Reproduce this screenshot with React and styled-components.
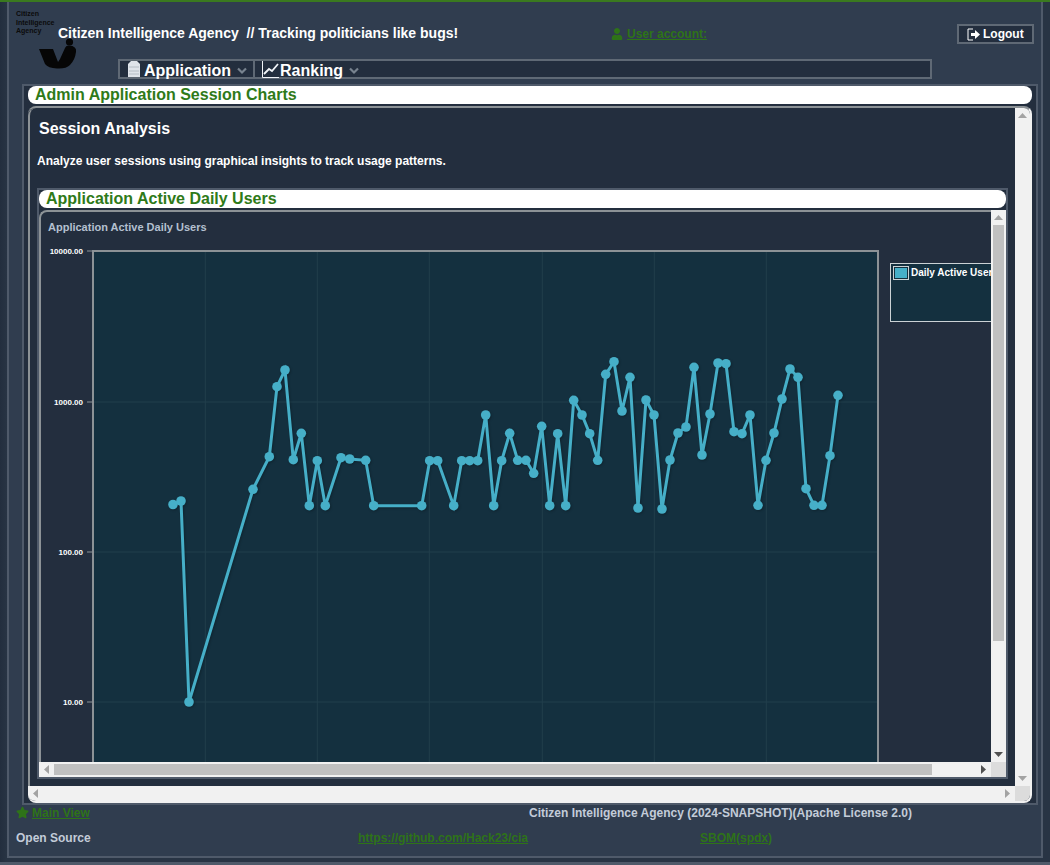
import React from "react";
import styled, { createGlobalStyle } from "styled-components";
import { FaUser, FaStar } from "react-icons/fa";

const GlobalStyle = createGlobalStyle`
  html, body {
    margin: 0;
    padding: 0;
    height: 865px;
    overflow: hidden;
    background: #232e3e;
    font-family: "Liberation Sans", Arial, sans-serif;
  }
`;

const colors = {
  main: "#303d4f",
  dark: "#232e3e",
  line: "#4f5a6a",
  barLine: "#5f6975",
  soft: "#8c9296",
  green: "#2f7a19",
  link: "#2e7318",
  muted: "#c3ccd9",
  plot: "#14303f",
  grid: "#213f4c",
  series: "#46afc8",
  track: "#f1f1f1",
  thumb: "#c0c0c0",
  corner: "#dcdcdc",
};

const Page = styled.div`
  height: 865px;
  box-sizing: border-box;
  border-top: 2px solid #3a7a1f;
  display: flex;
  flex-direction: column;
  background: linear-gradient(90deg, #232e3e, #283444 7px);
`;

const Frame = styled.div`
  width: 1036px;
  height: 856px;
  margin-left: 7px;
  box-sizing: border-box;
  border: solid ${colors.line};
  border-width: 0 2px 2px;
  background: ${colors.main};
`;

const BottomStrip = styled.div`
  margin-top: 4px;
  height: 3px;
  background: ${colors.line};
`;

const Header = styled.header`
  height: 82px;
  display: flex;
  flex-direction: column;
`;

const TopRow = styled.div`
  height: 57px;
  padding-left: 7px;
  display: flex;
`;

const Logo = styled.div`
  width: 42px;
  padding-top: 8px;
  font-size: 7px;
  line-height: 8.5px;
  font-weight: bold;
  color: #0b0b0b;

  svg {
    display: block;
    margin: 2px 0 0 22px;
  }
`;

const LogoText = styled.div`
  white-space: nowrap;
`;

const Title = styled.div`
  width: 553px;
  padding-top: 23px;
  font-size: 14px;
  line-height: 16px;
  font-weight: bold;
  color: #fff;
  white-space: pre;
`;

const SmallLink = styled.a`
  font-size: 12px;
  font-weight: bold;
  color: ${colors.link};
  text-decoration: underline;
`;

const UserBlock = styled.div`
  width: 346px;
  padding-top: 25px;
  height: 14px;
  display: flex;
  align-items: center;
  gap: 4px;
  color: ${colors.link};
`;

const LogoutButton = styled.button`
  margin-top: 22px;
  width: 77px;
  height: 20px;
  padding: 0 0 0 8px;
  box-sizing: border-box;
  border: 2px solid ${colors.barLine};
  background: ${colors.dark};
  color: #fff;
  font: bold 12px "Liberation Sans", Arial, sans-serif;
  display: flex;
  align-items: center;
  gap: 2px;
`;

const NavBar = styled.nav`
  margin-left: 109px;
  width: 814px;
  height: 20px;
  box-sizing: border-box;
  border: 2px solid ${colors.barLine};
  background: ${colors.dark};
  display: flex;
`;

const NavItem = styled.div`
  width: ${(p) => p.$width}px;
  padding-left: ${(p) => p.$inset}px;
  box-sizing: border-box;
  height: 16px;
  display: flex;
  align-items: center;
  color: #fff;
  font-size: 16px;
  font-weight: bold;
  line-height: 16px;
  border-right: ${(p) => (p.$divided ? `2px solid ${colors.barLine}` : "none")};
`;

const NavLabel = styled.span`
  margin: 4px 5px 0 ${(p) => p.$gap}px;
`;

const ChevronMark = styled.svg`
  margin-top: 3px;
`;

const ContentFrame = styled.main`
  margin-left: 13px;
  width: 1016px;
  height: 721px;
  box-sizing: border-box;
  border: 2px solid ${colors.line};
  padding: 0 4px 0;
  background: ${colors.dark};
`;

const TitleBar = styled.h2`
  margin: 0 0 2px;
  height: 18px;
  padding-left: ${(p) => p.$inset}px;
  background: #fff;
  border-radius: 8px;
  color: ${colors.green};
  font-size: 16px;
  line-height: 18px;
  font-weight: bold;
`;

const ScrollPanel = styled.section`
  height: 697px;
  box-sizing: border-box;
  border: solid;
  border-width: 2px 2px 2px 0;
  border-color: ${colors.soft} ${colors.track} ${colors.track};
  border-radius: 8px;
  background: ${colors.dark};
  overflow: hidden;
  display: grid;
  grid-template-columns: 1fr 15px;
  grid-template-rows: 1fr 15px;
`;

const PanelBody = styled.div`
  min-width: 0;
  min-height: 0;
  overflow: hidden;
  border-left: 2px solid ${colors.soft};
  border-top-left-radius: 8px;
`;

const Heading = styled.h3`
  margin: 11px 0 0 9px;
  font-size: 16px;
  line-height: 20px;
  font-weight: bold;
  color: #fff;
`;

const Intro = styled.p`
  margin: 15px 0 0 7px;
  font-size: 12px;
  line-height: 14px;
  font-weight: bold;
  color: #fff;
`;

const ChartFrame = styled.div`
  margin: 20px 0 0 7px;
  width: 971px;
  height: 591px;
  box-sizing: border-box;
  border: 2px solid ${colors.line};
`;

const ChartPanel = styled.div`
  height: 567px;
  background: ${colors.dark};
  display: grid;
  grid-template-columns: 1fr 15px;
  grid-template-rows: 1fr 15px;
`;

const ChartViewport = styled.div`
  min-width: 0;
  min-height: 0;
  overflow: hidden;
  border: solid ${colors.soft};
  border-width: 2px 0 0 2px;
  border-top-left-radius: 8px;

  svg {
    display: block;
  }
`;

const ScrollTrack = styled.div`
  background: ${colors.track};
  display: flex;
  flex-direction: ${(p) => (p.$vertical ? "column" : "row")};
  justify-content: space-between;
  min-width: 0;
  min-height: 0;
`;

const ArrowCell = styled.div`
  flex: 0 0 15px;
  height: 15px;
  display: flex;
  align-items: center;
  justify-content: center;
  color: ${(p) => (p.$active ? "#505050" : "#a3a3a3")};
`;

const Thumb = styled.div`
  flex: 0 0 auto;
  background: ${colors.thumb};
  width: ${(p) => (p.$vertical ? "11px" : `${p.$length}px`)};
  height: ${(p) => (p.$vertical ? `${p.$length}px` : "11px")};
  margin: ${(p) => (p.$vertical ? "0 2px" : "2px 0")};
  margin-right: ${(p) => (p.$vertical ? "2px" : "auto")};
  margin-bottom: ${(p) => (p.$vertical ? "auto" : "2px")};
`;

const ScrollCorner = styled.div`
  background: ${(p) => p.$color};
`;

const Footer = styled.footer`
  padding: 0 0 0 7px;
  font-size: 12px;
  font-weight: bold;
  color: ${colors.muted};
`;

const FooterRow = styled.div`
  display: grid;
  grid-template-columns: ${(p) => p.$columns};
  align-items: center;
  height: ${(p) => p.$height}px;
`;

const StarLink = styled.div`
  display: flex;
  align-items: center;
  gap: 3px;
  color: ${colors.link};
`;

// chart points in page pixels, the svg viewBox starts where the panel starts
const points = [
  [173, 504.5], [181, 501], [189, 702], [253, 489.3], [269.3, 456.7], [277, 386.7], [285, 370],
  [293.3, 459.7], [301.3, 433.3], [309.3, 505.7], [317.3, 460.7], [325.3, 505.7], [341, 457.7],
  [349.7, 459], [365.7, 460.3], [373.7, 505.7], [421.7, 505.7], [429.7, 460.7], [437.7, 460.7],
  [453.7, 505.7], [461.7, 460.7], [469.7, 460.7], [477.7, 460.7], [485.7, 415], [493.7, 505.7],
  [501.7, 460.7], [509.7, 433.3], [517.7, 460.3], [526, 460.3], [533.7, 473.3], [541.7, 426.3],
  [549.7, 505.7], [557.7, 433.7], [565.7, 505.7], [573.7, 400.3], [582, 415], [589.7, 433.7],
  [597.7, 460.3], [605.7, 374.3], [614, 361.7], [622, 411], [630, 377.3], [638, 508], [646, 400],
  [654, 415], [662, 509], [670, 460], [678, 433], [686, 427], [694, 367.3], [702, 455], [710, 414],
  [718, 363], [726, 363.7], [734, 431.7], [742, 433.7], [750, 415], [758, 505.3], [766, 460.3],
  [774, 433], [782, 399], [790, 369], [798, 377.3], [806, 488.7], [814, 505.3], [822, 505.3],
  [830, 455.7], [838, 395.3],
];

const yTicks = [
  [251, "10000.00"],
  [402, "1000.00"],
  [552, "100.00"],
  [702, "10.00"],
];
const xGrid = [205.3, 317.3, 429.3, 542.3, 654.3, 766.3];

const ChartTitle = styled.text`
  font: bold 11px "Liberation Sans", Arial, sans-serif;
  fill: #b4c0d0;
`;

const TickLabel = styled.text`
  font: bold 8px "Liberation Sans", Arial, sans-serif;
  fill: #fff;
  text-anchor: end;
`;

const LegendLabel = styled.text`
  font: bold 10px "Liberation Sans", Arial, sans-serif;
  fill: #fff;
`;

const Series = styled.g`
  filter: drop-shadow(1px 1px 1px rgba(0, 0, 0, 0.25));
`;

const SessionChart = () => (
  <svg width="995" height="687" viewBox="41 212 995 687">
    <ChartTitle x="48" y="231">Application Active Daily Users</ChartTitle>
    <rect x="93" y="251" width="785" height="601" fill={colors.plot} />
    {xGrid.map((x) => (
      <line key={x} x1={x} x2={x} y1="251" y2="852" stroke={colors.grid} />
    ))}
    {yTicks.map(([y, label]) => (
      <g key={label}>
        <line x1="87" x2="93" y1={y} y2={y} stroke={colors.soft} />
        {y > 251 && <line x1="93" x2="878" y1={y} y2={y} stroke={colors.grid} />}
        <TickLabel x="83" y={y + 2.5}>{label}</TickLabel>
      </g>
    ))}
    <rect x="93" y="251" width="785" height="601" fill="none" stroke={colors.soft} strokeWidth="2" />
    <Series>
      <polyline
        points={points.map((p) => p.join(",")).join(" ")}
        fill="none"
        stroke={colors.series}
        strokeWidth="3"
      />
      {points.map(([x, y]) => (
        <circle key={x} cx={x} cy={y} r="4.8" fill={colors.series} />
      ))}
    </Series>
    <rect x="890.5" y="263.5" width="120" height="58" fill={colors.plot} stroke="#cbd2d5" />
    <rect x="893.5" y="266.5" width="15" height="13" fill="none" stroke="#cbd2d5" />
    <rect x="895" y="268" width="12" height="10" fill={colors.series} />
    <LegendLabel x="911" y="276">Daily Active Users</LegendLabel>
  </svg>
);

const LogoMark = () => (
  <svg width="40" height="32" viewBox="38 38 40 32" fill="#060606">
    <circle cx="69.5" cy="42" r="3.6" />
    <path d="M39 49H53L58 62L60 59L65 48Q66 45 69 45.5Q77 46 76 52Q75 60 70 65Q66 69 57 68.5Q48 68 45 64Z" />
  </svg>
);

const DocIcon = () => (
  <svg width="12" height="16" viewBox="0 0 12 16">
    <path d="M3 0h6l3 3v13H0V3z" fill="#dfe4ea" />
    <path d="M1 6h10M1 10h10M1 13h10" stroke="#aab2bc" strokeWidth="0.8" />
  </svg>
);

const LineChartIcon = () => (
  <svg width="17" height="17" viewBox="0 0 17 17" fill="none" stroke="#f1f4f8">
    <path d="M0.5 0v16.5H17" />
    <path d="M2 13l5-5 3 2 6-7" strokeWidth="1.8" />
  </svg>
);

const Chevron = () => (
  <ChevronMark width="12" height="8" viewBox="0 0 12 8" fill="none" stroke="#78838f" strokeWidth="2.2">
    <path d="M2 1.5l4 4 4-4" />
  </ChevronMark>
);

const LogoutIcon = () => (
  <svg width="14" height="13" viewBox="0 0 14 13" fill="none">
    <path d="M6 1H1v11h5" stroke="#fff" />
    <path d="M4 5h4V2l5 4.5L8 11V8H4z" fill="#fff" />
  </svg>
);

const arrowPaths = {
  up: "M4.5 0L9 5H0z",
  down: "M0 0h9L4.5 5z",
  left: "M5 0v9L0 4.5z",
  right: "M0 0l5 4.5L0 9z",
};

const Arrow = ({ dir, active }) => {
  const upright = dir === "up" || dir === "down";
  return (
    <ArrowCell $active={active}>
      <svg width={upright ? 9 : 5} height={upright ? 5 : 9} fill="currentColor">
        <path d={arrowPaths[dir]} />
      </svg>
    </ArrowCell>
  );
};

const App = () => (
  <Page>
    <GlobalStyle />
    <Frame>
      <Header>
        <TopRow>
          <Logo>
            <LogoText>Citizen</LogoText>
            <LogoText>Intelligence</LogoText>
            <LogoText>Agency</LogoText>
            <LogoMark />
          </Logo>
          <Title>{"Citizen Intelligence Agency  // Tracking politicians like bugs!"}</Title>
          <UserBlock>
            <FaUser size={12} />
            <SmallLink href="#">User account:</SmallLink>
          </UserBlock>
          <LogoutButton>
            <LogoutIcon />
            Logout
          </LogoutButton>
        </TopRow>
        <NavBar>
          <NavItem $width={135} $inset={8} $divided>
            <DocIcon />
            <NavLabel $gap={4}>Application</NavLabel>
            <Chevron />
          </NavItem>
          <NavItem $width={120} $inset={7}>
            <LineChartIcon />
            <NavLabel $gap={1}>Ranking</NavLabel>
            <Chevron />
          </NavItem>
        </NavBar>
      </Header>
      <ContentFrame>
        <TitleBar $inset={7}>Admin Application Session Charts</TitleBar>
        <ScrollPanel>
          <PanelBody>
            <Heading>Session Analysis</Heading>
            <Intro>Analyze user sessions using graphical insights to track usage patterns.</Intro>
            <ChartFrame>
              <TitleBar $inset={7}>Application Active Daily Users</TitleBar>
              <ChartPanel>
                <ChartViewport>
                  <SessionChart />
                </ChartViewport>
                <ScrollTrack $vertical>
                  <Arrow dir="up" />
                  <Thumb $vertical $length={416} />
                  <Arrow dir="down" active />
                </ScrollTrack>
                <ScrollTrack>
                  <Arrow dir="left" />
                  <Thumb $length={878} />
                  <Arrow dir="right" active />
                </ScrollTrack>
                <ScrollCorner $color={colors.corner} />
              </ChartPanel>
            </ChartFrame>
          </PanelBody>
          <ScrollTrack $vertical>
            <Arrow dir="up" />
            <Arrow dir="down" />
          </ScrollTrack>
          <ScrollTrack>
            <Arrow dir="left" />
            <Arrow dir="right" />
          </ScrollTrack>
          <ScrollCorner $color={colors.corner} />
        </ScrollPanel>
      </ContentFrame>
      <Footer>
        <FooterRow $columns="513px 1fr" $height={15}>
          <StarLink>
            <FaStar size={13} />
            <SmallLink href="#">Main View</SmallLink>
          </StarLink>
          <span>Citizen Intelligence Agency (2024-SNAPSHOT)(Apache License 2.0)</span>
        </FooterRow>
        <FooterRow $columns="342px 342px 1fr" $height={35}>
          <span>Open Source</span>
          <SmallLink href="#">https://github.com/Hack23/cia</SmallLink>
          <SmallLink href="#">SBOM(spdx)</SmallLink>
        </FooterRow>
      </Footer>
    </Frame>
    <BottomStrip />
  </Page>
);

export default App;
